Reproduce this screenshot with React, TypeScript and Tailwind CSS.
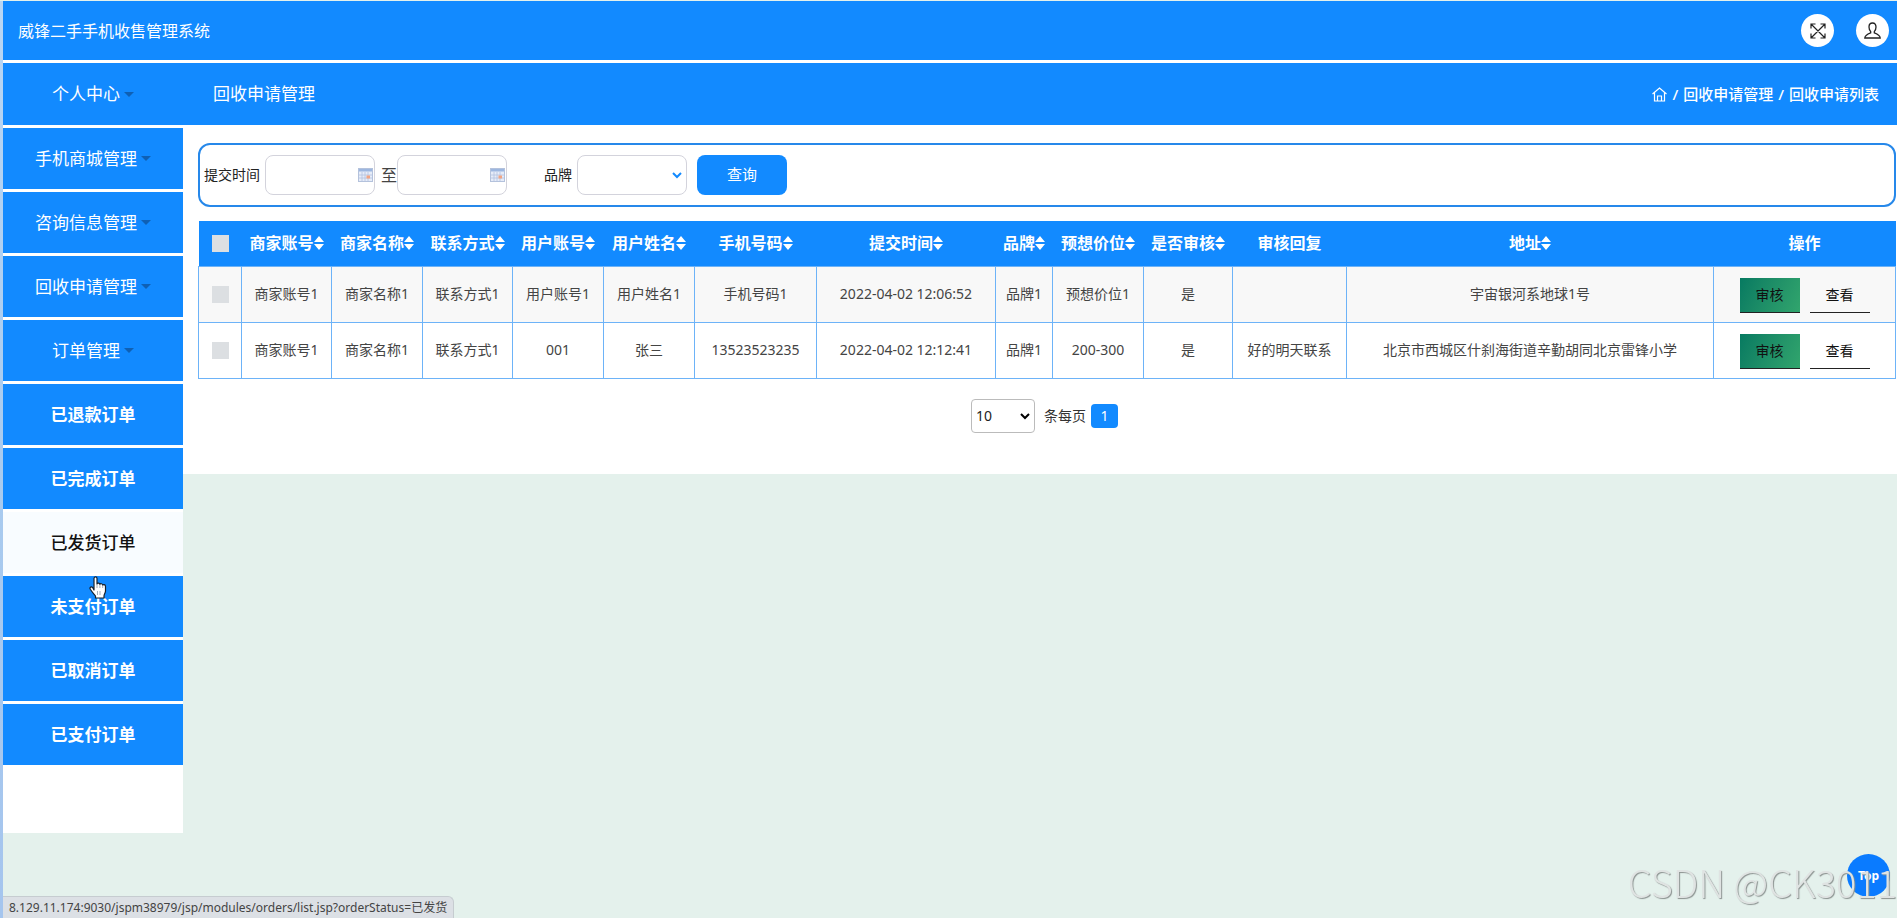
import React from "react";

type MenuItem = { label: string; group?: boolean; active?: boolean };

const menu: MenuItem[] = [
  { label: "手机商城管理", group: true },
  { label: "咨询信息管理", group: true },
  { label: "回收申请管理", group: true },
  { label: "订单管理", group: true },
  { label: "已退款订单" },
  { label: "已完成订单" },
  { label: "已发货订单", active: true },
  { label: "未支付订单" },
  { label: "已取消订单" },
  { label: "已支付订单" },
];

const columns = [
  { title: "商家账号", sort: true, width: "w-[90px]" },
  { title: "商家名称", sort: true, width: "w-[91px]" },
  { title: "联系方式", sort: true, width: "w-[90px]" },
  { title: "用户账号", sort: true, width: "w-[91px]" },
  { title: "用户姓名", sort: true, width: "w-[91px]" },
  { title: "手机号码", sort: true, width: "w-[122px]" },
  { title: "提交时间", sort: true, width: "w-[179px]" },
  { title: "品牌", sort: true, width: "w-[57px]" },
  { title: "预想价位", sort: true, width: "w-[91px]" },
  { title: "是否审核", sort: true, width: "w-[89px]" },
  { title: "审核回复", sort: false, width: "w-[114px]" },
  { title: "地址", sort: true, width: "" },
  { title: "操作", sort: false, width: "w-[182px]" },
];

const rows = [
  ["商家账号1", "商家名称1", "联系方式1", "用户账号1", "用户姓名1", "手机号码1", "2022-04-02 12:06:52", "品牌1", "预想价位1", "是", "", "宇宙银河系地球1号"],
  ["商家账号1", "商家名称1", "联系方式1", "001", "张三", "13523523235", "2022-04-02 12:12:41", "品牌1", "200-300", "是", "好的明天联系", "北京市西城区什刹海街道辛勤胡同北京雷锋小学"],
];

function Caret() {
  return (
    <svg className="ml-1 h-[5px] w-[10px]" viewBox="0 0 10 5" aria-hidden="true">
      <path d="M0 0h10L5 5z" fill="#0f60b4" />
    </svg>
  );
}

function SortIcon() {
  return (
    <svg className="h-[14px] w-[10px] shrink-0" viewBox="0 0 10 14" aria-hidden="true">
      <path d="M5 0l5 6H0zM5 14l5-6H0z" fill="#fff" />
    </svg>
  );
}

function Chevron({ className }: { className: string }) {
  return (
    <svg className={className} viewBox="0 0 10 7" fill="none" aria-hidden="true">
      <path d="M1 1l4 4 4-4" stroke="currentColor" strokeWidth="2" />
    </svg>
  );
}

function CalendarIcon() {
  return (
    <svg className="pointer-events-none absolute top-[13px] right-[2px] h-[14px] w-[15px]" viewBox="0 0 15 14" aria-hidden="true">
      <rect x=".5" y=".5" width="14" height="13" fill="#e6ecf8" stroke="#b4c2dc" />
      <path d="M1 1h13v2.500H1z" fill="#9db7e0" />
      <path d="M4 4v9M7 4v9M10 4v9M1 7h13M1 10h13" stroke="#b3c3e0" strokeWidth=".8" />
      <path d="M8.500 7.500h3.500v3H8.500z" fill="#f2a483" />
    </svg>
  );
}

function DateField({ id }: { id: string }) {
  return (
    <span className="relative">
      <input id={id} type="text" className="block h-10 w-[110px] rounded-lg border border-[#d3d3dc] bg-white px-2 text-sm outline-none" />
      <CalendarIcon />
    </span>
  );
}

function Tick({ label }: { label: string }) {
  return <input type="checkbox" aria-label={label} className="mx-auto block size-[17px] appearance-none bg-[#dcdfe2]" />;
}

function HandCursor() {
  return (
    <svg className="pointer-events-none absolute top-[64px] left-[86px] z-10 h-[23px] w-[18px]" viewBox="0 0 18 23" aria-hidden="true">
      <path
        d="M5 14V2.500C5 .4 8 .4 8 2.500V8c.2-1.300 2.800-1.200 2.900.4.4-1.100 2.700-.9 2.800.7.5-.9 2.800-.7 2.800 1.300V15c0 2-1.500 3-1.500 5v2H6.500v-2C5 18 3 16 1.300 13.300.2 11.300 2.500 10 3.800 11.800z"
        fill="#fff"
        stroke="#15202e"
        strokeWidth="1.200"
        strokeLinejoin="round"
      />
      <path d="M8 8v4M10.900 8.500V12M13.700 9.500V12M8.500 15v4M11 15v4" stroke="#8d99a8" strokeWidth=".8" />
    </svg>
  );
}

export default function App() {
  return (
    <div className="flex min-h-screen bg-[#e4f1ec] pt-px font-['Noto_Sans','Noto_Sans_CJK_SC',sans-serif] text-[#333]">
      <div className="w-[3px] shrink-0 bg-linear-to-b from-[#b9d6f4] via-[#a9cbef] to-[#a5c5ee]" />
      <div className="min-w-0 flex-1">
        <header className="flex h-[62px] items-center justify-between border-b-3 border-white bg-[#128aff] pr-2 pl-[15px]">
          <h1 className="text-base text-white">威锋二手手机收售管理系统</h1>
          <div className="flex gap-[22px]">
            <button type="button" aria-label="全屏" className="flex size-[33px] items-center justify-center rounded-full bg-white">
              <svg className="size-4" viewBox="0 0 16 16" fill="none" stroke="#222" strokeWidth="1.200" aria-hidden="true">
                <path d="M1 1l14 14M15 1L1 15M1 5.500V1h4.500M10.500 1H15v4.500M15 10.500V15h-4.500M5.500 15H1v-4.500" />
              </svg>
            </button>
            <button type="button" aria-label="用户" className="flex size-[33px] items-center justify-center rounded-full bg-white">
              <svg className="size-[17px]" viewBox="0 0 17 17" fill="none" stroke="#222" strokeWidth="1.300" aria-hidden="true">
                <path d="M8.500 1C6 1 5 2.800 5 5c0 2.200.6 3.500 1.700 4.600v1.200C3.500 12 .8 13 .8 16h15.400c0-3-2.700-4-5.900-5.200V9.600C11.400 8.500 12 7.200 12 5c0-2.200-1-4-3.500-4z" />
              </svg>
            </button>
          </div>
        </header>

        <div className="flex items-start">
          <nav className="w-[180px] shrink-0 bg-white pb-[65px] text-[17px]">
            <a href="#profile" className="flex h-[65px] items-center justify-center border-b-3 border-white bg-[#128aff] text-white">
              个人中心
              <Caret />
            </a>
            <ul>
              {menu.map((item) => (
                <li key={item.label} className="relative">
                  <a
                    href={"#" + item.label}
                    className={
                      "flex h-16 items-center justify-center border-b-3 border-white " +
                      (item.active ? "bg-[#f8fcff] font-medium text-[#111]" : item.group ? "bg-[#128aff] text-white" : "bg-[#128aff] font-bold text-white")
                    }
                  >
                    {item.label}
                    {item.group && <Caret />}
                  </a>
                  {item.active && <HandCursor />}
                </li>
              ))}
            </ul>
          </nav>

          <main className="min-w-0 flex-1 bg-white pb-[41px]">
            <div className="flex h-[62px] items-center justify-between bg-[#128aff] pr-[18px] pl-[30px] text-white">
              <h2 className="text-[17px]">回收申请管理</h2>
              <ol className="flex items-center gap-[5px] text-[15px] font-medium">
                <li>
                  <a href="#home" aria-label="首页">
                    <svg className="size-[15px]" viewBox="0 0 15 15" fill="none" stroke="#fff" strokeWidth="1.200" aria-hidden="true">
                      <path d="M.5 7L7.500 1l7 6M2.500 5.500V14h10V5.500M5.500 14V9h4v5" />
                    </svg>
                  </a>
                </li>
                <li>/</li>
                <li>回收申请管理</li>
                <li>/</li>
                <li>回收申请列表</li>
              </ol>
            </div>

            <div className="pt-[18px] pr-px pl-[15px]">
              <form className="flex h-16 items-center rounded-xl border-2 border-[#2688ea] pl-1 text-sm text-[#222]">
                <label htmlFor="from" className="mr-[5px]">提交时间</label>
                <DateField id="from" />
                <label htmlFor="to" className="ml-[6px] text-base text-[#444]">至</label>
                <DateField id="to" />
                <label htmlFor="brand" className="mr-[5px] ml-[37px]">品牌</label>
                <span className="relative">
                  <select id="brand" className="block h-10 w-[110px] appearance-none rounded-lg border border-[#d3d3dc] bg-white px-2 outline-none">
                    <option></option>
                  </select>
                  <Chevron className="pointer-events-none absolute top-[17px] right-[5px] h-[7px] w-[10px] text-[#128aff]" />
                </span>
                <button type="button" className="ml-[10px] h-10 w-[90px] rounded-lg bg-[#128aff] text-[15px] text-white">查询</button>
              </form>

              <table className="mt-[14px] w-full table-fixed border-collapse text-center text-sm text-[#444]">
                <colgroup>
                  <col className="w-[43px]" />
                  {columns.map((c) => (
                    <col key={c.title} className={c.width} />
                  ))}
                </colgroup>
                <thead>
                  <tr className="h-[45px] bg-[#128aff] text-base text-white">
                    <th className="p-0"><Tick label="全选" /></th>
                    {columns.map((c) => (
                      <th key={c.title} className="p-0 font-bold whitespace-nowrap">
                        <span className="flex items-center justify-center">
                          {c.title}
                          {c.sort && <SortIcon />}
                        </span>
                      </th>
                    ))}
                  </tr>
                </thead>
                <tbody>
                  {rows.map((row, i) => (
                    <tr key={i} className="h-14 odd:bg-[#f8f8f8]">
                      <td className="border border-[#6db3f8] p-0"><Tick label={"选择第" + (i + 1) + "行"} /></td>
                      {row.map((cell, j) => (
                        <td key={j} className="border border-[#6db3f8] p-0 whitespace-nowrap">{cell}</td>
                      ))}
                      <td className="border border-[#6db3f8] p-0">
                        <div className="flex justify-center gap-[10px] pt-[2px] text-[#111]">
                          <button type="button" className="h-[35px] w-[60px] border-b border-[#222] bg-linear-115 from-[#067a61] to-[#31a56d]">审核</button>
                          <button type="button" className="h-[35px] w-[60px] border-b border-[#222]">查看</button>
                        </div>
                      </td>
                    </tr>
                  ))}
                </tbody>
              </table>

              <div className="mt-5 flex items-center justify-center pr-[5px] text-sm">
                <span className="relative">
                  <select aria-label="条每页" className="block h-[34px] w-16 appearance-none rounded border border-[#bbb] bg-white pl-1 text-[#222]">
                    <option>10</option>
                  </select>
                  <Chevron className="pointer-events-none absolute top-[14px] right-[5px] h-[7px] w-[10px] text-black" />
                </span>
                <span className="ml-[9px]">条每页</span>
                <button type="button" className="ml-[5px] h-6 w-[27px] rounded bg-[#128aff] text-white">1</button>
              </div>
            </div>
          </main>
        </div>
      </div>

      <a href="#top" className="fixed right-[7px] bottom-[21px] flex size-[43px] items-center justify-center rounded-full bg-[#0a7bff] text-xs font-bold text-white">
        Top
      </a>
      <div className="pointer-events-none fixed right-0 bottom-[10px] font-['Noto_Sans_CJK_SC',sans-serif] text-[38px] leading-[52px] font-light text-[#dfe3e2] [text-shadow:1px_1px_1px_#8b9290]">
        CSDN @CK3011
      </div>
      <div className="fixed bottom-0 left-[3px] h-[22px] rounded-tr-md border-t border-r border-[#c6ccd0] bg-[#dce0e5] px-[6px] text-xs leading-[21px] text-[#444]">
        8.129.11.174:9030/jspm38979/jsp/modules/orders/list.jsp?orderStatus=已发货
      </div>
    </div>
  );
}
